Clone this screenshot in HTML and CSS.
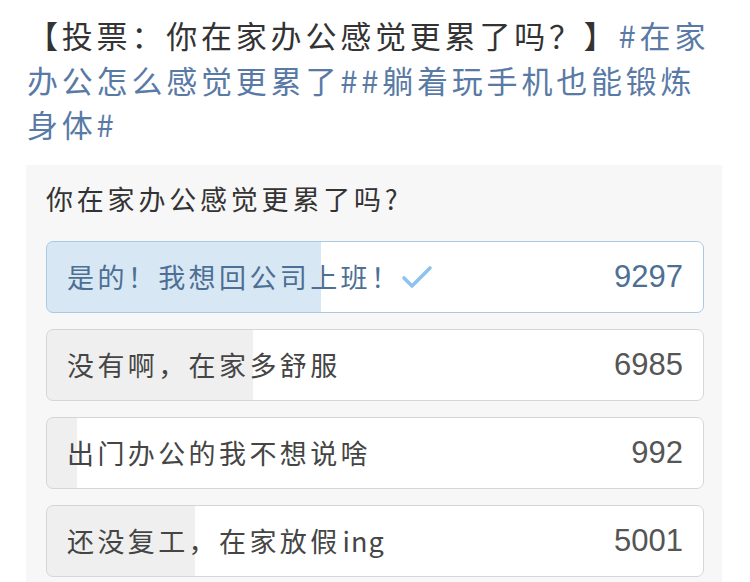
FILE: index.html
```html
<!DOCTYPE html>
<html lang="zh-CN">
<head>
<meta charset="utf-8">
<link rel="stylesheet" href="styles.css">
</head>
<body>
<div class="page">
  <p class="post">【投票：你在家办公感觉更累了吗？】<span class="tag">#在家办公怎么感觉更累了##躺着玩手机也能锻炼身体#</span></p>
  <div class="card">
    <div class="question">你在家办公感觉更累了吗?</div>
    <div class="options">
      <div class="option chosen" style="--p: 41.7%">
        <span class="label">是的！我想回公司上班！<svg class="check" viewBox="0 0 32 24" width="32" height="24"><path d="M3 13 L11 21 L29 3" fill="none" stroke="#8ec2ef" stroke-width="3.6" stroke-linecap="round" stroke-linejoin="round"/></svg></span>
        <span class="count">9297</span>
      </div>
      <div class="option" style="--p: 31.4%">
        <span class="label">没有啊，在家多舒服</span>
        <span class="count">6985</span>
      </div>
      <div class="option" style="--p: 4.5%">
        <span class="label">出门办公的我不想说啥</span>
        <span class="count">992</span>
      </div>
      <div class="option" style="--p: 22.5%">
        <span class="label">还没复工，在家放假<span class="latin">ing</span></span>
        <span class="count">5001</span>
      </div>
    </div>
  </div>
</div>
</body>
</html>
```
FILE: styles.css
```css
html, body {
  margin: 0;
  padding: 0;
  background: #ffffff;
}
body {
  font-family: "Noto Sans CJK SC", "Noto Sans", sans-serif;
  color: #333333;
  width: 750px;
  height: 582px;
  overflow: hidden;
}
.page {
  padding-top: 13px;
}
.post {
  margin: 0;
  padding: 0 28px 0 27px;
  font-size: 31px;
  line-height: 44.5px;
  letter-spacing: 3.8px;
  color: #333333;
}
.tag {
  color: #5a7aa6;
}
.card {
  margin: 18px 28px 0 26px;
  background: #f7f7f7;
  padding: 14px 18px 20px 20px;
}
.question {
  font-size: 27px;
  letter-spacing: 3.8px;
  line-height: 40px;
  color: #333333;
  padding-bottom: 22px;
}
.options {
  display: flex;
  flex-direction: column;
  gap: 16px;
}
.option {
  height: 72px;
  box-sizing: border-box;
  border: 1px solid #d6d6d6;
  border-radius: 7px;
  background: linear-gradient(to right, #efefef var(--p), #ffffff var(--p));
  display: flex;
  align-items: center;
  justify-content: space-between;
  padding: 0 20px 0 20px;
  color: #454545;
}
.option.chosen {
  border-color: #abc9e2;
  background: linear-gradient(to right, #d8e7f4 var(--p), #ffffff var(--p));
  color: #4d6f94;
}
.label {
  font-size: 27px;
  letter-spacing: 3.4px;
  display: flex;
  align-items: center;
}
.latin {
  letter-spacing: 1px;
  margin-left: 2px;
}
.check {
  margin-left: 0;
}
.count {
  font-family: "Liberation Sans", sans-serif;
  font-size: 31px;
  color: #555555;
}
.chosen .count {
  color: #4d6f94;
}
```
